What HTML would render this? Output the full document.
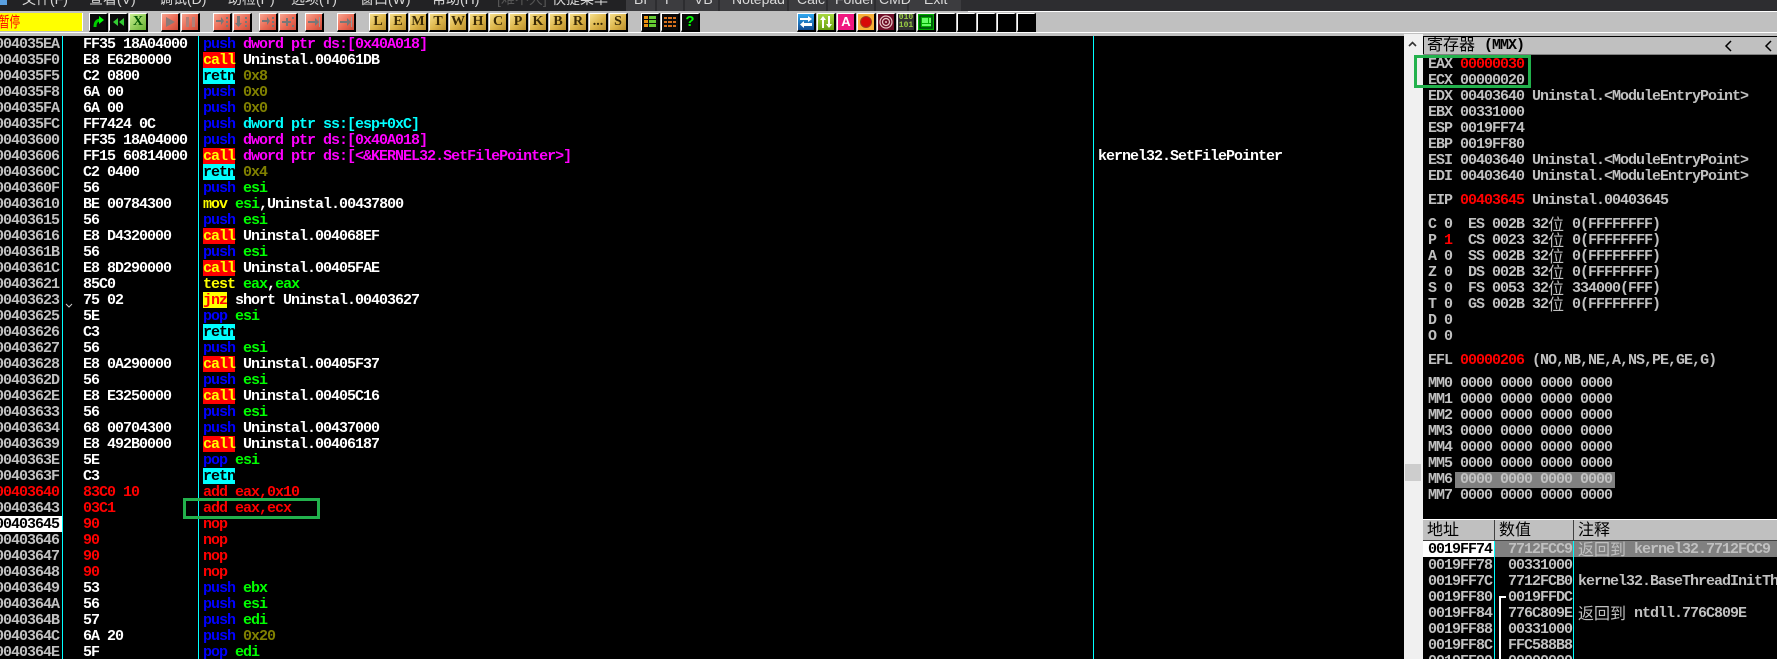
<!DOCTYPE html>
<html>
<head>
<meta charset="utf-8">
<style>
html,body{margin:0;padding:0;background:#000;}
#p{position:relative;width:1777px;height:659px;overflow:hidden;background:#000;font-family:"Liberation Mono","DejaVu Sans Mono",monospace;}
.a{position:absolute;}
.m{font-size:15px;letter-spacing:-1px;font-weight:bold;line-height:16px;white-space:pre;}
/* menu */
.mi{position:absolute;top:-9px;height:16px;line-height:16px;font:14px/16px "Liberation Sans","Noto Sans CJK SC",sans-serif;color:#d8d8d8;white-space:pre;}
.tab{position:absolute;top:0;height:11px;background:#3c3c3f;}
/* toolbar */
.b{position:absolute;top:13px;width:16px;height:16px;border:1px solid;border-color:#fff #000 #000 #fff;border-width:1px 2px 2px 1px;overflow:hidden;}
.k{background:#0a0a0a;}
.r{background:linear-gradient(135deg,#f8a490,#ea6a54 55%,#cc4c3a);}
.y{background:linear-gradient(135deg,#f7e08c,#dcb54a 55%,#b98e2c);font:bold 14px/16px "Liberation Serif",serif;color:#3a2a05;text-align:center;}
.b svg{display:block;width:16px;height:16px;}
/* disasm */
#ad{left:0;top:37px;width:62px;height:622px;overflow:hidden;color:#c0c0c0;}
#ad div{height:16px;text-indent:-5px;}
#by{left:83px;top:37px;color:#fff;}
#di{left:203px;top:37px;color:#fff;}
.bl{color:#0000ff}.mg{color:#ff00ff}.cy{color:#00ffff}.gr{color:#00ff00}.ol{color:#808000}.ye{color:#ffff00}.rd{color:#ff0000}.wh{color:#fff}
.c{display:inline-block;height:15px;background:#ff0000;box-shadow:0 -1px 0 #ff0000;color:#ffff00;vertical-align:top;}
.t{display:inline-block;height:15px;background:#00ffff;box-shadow:0 -1px 0 #00ffff;color:#000;vertical-align:top;}
.j{display:inline-block;height:15px;background:#ffff00;box-shadow:0 -1px 0 #ffff00;color:#ff0000;vertical-align:top;}
.line{position:absolute;top:36px;height:623px;width:1px;background:#00ffff;}
/* regs */
.rg{position:absolute;left:1428px;color:#c0c0c0;}
.w{display:inline-block;position:relative;top:-2px;width:16px;height:16px;font:normal 16px/16px "WenQuanYi Zen Hei","Noto Sans CJK SC",sans-serif;letter-spacing:0;vertical-align:top;}
.h{position:absolute;font:16px/20px "Liberation Sans","Noto Sans CJK SC",sans-serif;color:#000;}
.s{position:absolute;height:16px;color:#c0c0c0;}
.z{display:inline-block;position:relative;top:-2px;width:48px;height:16px;font:normal 16px/16px "WenQuanYi Zen Hei","Noto Sans CJK SC",sans-serif;letter-spacing:0;vertical-align:top;}
</style>
</head>
<body>
<div id="p">
<!-- menu bar -->
<div class="a" style="left:0;top:0;width:1777px;height:11px;background:#2d2d30;"></div>
<div class="a" style="left:0;top:0;width:626px;height:11px;background:#222224;"></div>
<div class="a" style="left:0;top:0;width:7px;height:5px;background:#5aa0e0;"></div>
<div class="tab" style="left:626px;width:29px"></div>
<div class="tab" style="left:657px;width:26px"></div>
<div class="tab" style="left:685px;width:33px"></div>
<div class="tab" style="left:720px;width:67px"></div>
<div class="tab" style="left:789px;width:37px"></div>
<div class="tab" style="left:828px;width:46px"></div>
<div class="tab" style="left:876px;width:31px"></div>
<div class="tab" style="left:909px;width:52px"></div>
<div class="mi" style="left:22px">文件(F)</div>
<div class="mi" style="left:89px">查看(V)</div>
<div class="mi" style="left:159px">调试(D)</div>
<div class="mi" style="left:228px">助检(P)</div>
<div class="mi" style="left:291px">选项(T)</div>
<div class="mi" style="left:360px">窗口(W)</div>
<div class="mi" style="left:432px">帮助(H)</div>
<div class="mi" style="left:497px;color:#555">[难不大]</div>
<div class="mi" style="left:552px">快捷菜单</div>
<div class="mi" style="left:634px">BP</div>
<div class="mi" style="left:665px">P</div>
<div class="mi" style="left:694px">VB</div>
<div class="mi" style="left:732px">Notepad</div>
<div class="mi" style="left:797px">Calc</div>
<div class="mi" style="left:835px">Folder</div>
<div class="mi" style="left:879px">CMD</div>
<div class="mi" style="left:924px">Exit</div>

<!-- toolbar strip -->
<div class="a" style="left:0;top:11px;width:1777px;height:25px;background:#c0c0c0;"></div>
<div class="a" style="left:968px;top:11px;width:809px;height:1px;background:#fff;"></div>
<div class="a" style="left:0;top:32px;width:1777px;height:1px;background:#fff;"></div>
<div class="a" style="left:0;top:13px;width:82px;height:18px;background:#ffff00;overflow:hidden;">
<span class="a" style="left:-1px;top:0;font:15px/18px 'Noto Sans CJK SC',sans-serif;color:#f00;transform:scaleX(.7);transform-origin:0 0;white-space:pre;">暂停</span></div>
<div class="a" style="left:82px;top:13px;width:1px;height:18px;background:#fff;"></div>

<div class="b k" style="left:89px"><svg viewBox="0 0 16 16"><path d="M5 13C5 8 7 6 11 6" stroke="#0c0" stroke-width="3" fill="none"/><path d="M9 2l5 4-5 4z" fill="#0f0"/></svg></div>
<div class="b k" style="left:109px"><svg viewBox="0 0 16 16"><path d="M8 4v8L3 8zM14 4v8L9 8z" fill="#3c3"/></svg></div>
<div class="b" style="left:129px;background:linear-gradient(135deg,#c8f090,#66b030);font:bold 14px/16px 'Liberation Serif',serif;color:#050;text-align:center;">X</div>

<div class="b r" style="left:161px"><svg viewBox="0 0 16 16"><path d="M4 3l9 5-9 5z" fill="#8a7a78"/></svg></div>
<div class="b r" style="left:181px"><svg viewBox="0 0 16 16"><path d="M4 3h3v10H4zM10 3h3v10h-3z" fill="#b08078"/></svg></div>
<div class="b r" style="left:213px"><svg viewBox="0 0 16 16"><path d="M2 6h5V3l3 4-3 4V8H2zM12 3h2v2h-2zM12 7h2v2h-2zM12 11h2v2h-2z" fill="#777"/></svg></div>
<div class="b r" style="left:233px"><svg viewBox="0 0 16 16"><path d="M3 2h3v7h2l-3.500 4L1 9h2zM11 3h2v2h-2zM11 7h2v2h-2zM11 11h2v2h-2z" fill="#777"/></svg></div>
<div class="b r" style="left:259px"><svg viewBox="0 0 16 16"><path d="M2 6h5V3l3 4-3 4V8H2zM12 3h2v2h-2zM12 7h2v2h-2zM12 11h2v2h-2z" fill="#777"/></svg></div>
<div class="b r" style="left:279px"><svg viewBox="0 0 16 16"><path d="M2 7h4V4h2v3h3v2H8v3H6V9H2zM12 3h2v2h-2zM12 11h2v2h-2z" fill="#777"/></svg></div>
<div class="b r" style="left:305px"><svg viewBox="0 0 16 16"><path d="M2 7h7V4l4 4-4 4V9H2z" fill="#777"/><path d="M13 3h1v10h-1z" fill="#999"/></svg></div>
<div class="b r" style="left:337px"><svg viewBox="0 0 16 16"><path d="M2 7h7V4l4 4-4 4V9H2z" fill="#777"/><path d="M13 3h1v10h-1z" fill="#999"/></svg></div>

<div class="b y" style="left:369px">L</div>
<div class="b y" style="left:389px">E</div>
<div class="b y" style="left:409px">M</div>
<div class="b y" style="left:429px">T</div>
<div class="b y" style="left:449px">W</div>
<div class="b y" style="left:469px">H</div>
<div class="b y" style="left:489px">C</div>
<div class="b y" style="left:509px">P</div>
<div class="b y" style="left:529px">K</div>
<div class="b y" style="left:549px">B</div>
<div class="b y" style="left:569px">R</div>
<div class="b y" style="left:589px">...</div>
<div class="b y" style="left:609px">S</div>

<div class="b k" style="left:641px"><svg viewBox="0 0 16 16"><path d="M2 2h4v3H2zM2 6h4v3H2zM2 10h4v3H2z" fill="#e89010"/><path d="M7 2h7v3H7zM7 6h7v3H7zM7 10h7v3H7z" fill="#6c3"/></svg></div>
<div class="b k" style="left:661px"><svg viewBox="0 0 16 16"><path d="M2 3h3v2H2zM6 3h4v2H6zM11 3h3v2h-3zM2 7h3v2H2zM6 7h4v2H6zM11 7h3v2h-3zM2 11h3v2H2zM6 11h4v2H6zM11 11h3v2h-3z" fill="#d8701c"/></svg></div>
<div class="b k" style="left:681px;color:#0f0;font:bold 15px/16px 'Liberation Sans',sans-serif;text-align:center;">?</div>

<div class="b" style="left:797px;background:linear-gradient(180deg,#30a8f0,#104a90)"><svg viewBox="0 0 16 16"><path d="M2 4h8V2l4 3-4 3V6H2zM14 9H6V7L2 10.500 6 14v-2h8z" fill="#fff"/></svg></div>
<div class="b" style="left:817px;background:linear-gradient(180deg,#a8d840,#68a010)"><svg viewBox="0 0 16 16"><path d="M5 2l3 4H6v8H4V6H2zM11 14L8 10h2V2h2v8h2z" fill="#fff"/></svg></div>
<div class="b" style="left:837px;background:#f01880;color:#fff;font:bold 13px/16px 'Liberation Sans',sans-serif;text-align:center;">A</div>
<div class="b" style="left:857px;background:#f8b038"><svg viewBox="0 0 16 16"><circle cx="8" cy="8" r="5.500" fill="#d80808" stroke="#a04020"/></svg></div>
<div class="b" style="left:877px;background:#701028"><svg viewBox="0 0 16 16"><circle cx="8" cy="8" r="6" fill="none" stroke="#e8c8c8" stroke-width="1.200"/><circle cx="8" cy="8" r="3.500" fill="none" stroke="#e8c8c8" stroke-width="1.200"/><circle cx="8" cy="8" r="1" fill="#e8c8c8"/></svg></div>
<div class="b" style="left:897px;background:#333;color:#9c4;font:bold 8px/8px 'Liberation Mono',monospace;text-align:center;">010<br>101</div>
<div class="b" style="left:917px;background:#0a0"><svg viewBox="0 0 16 16"><path d="M2 2h12v12H2z" fill="none" stroke="#041" stroke-width="1.500"/><path d="M4 4h6v5H4zM11 4h2v5h-2zM4 10h9v2H4z" fill="#6f6"/></svg></div>
<div class="b" style="left:937px;background:#000"></div>
<div class="b" style="left:957px;background:#000"></div>
<div class="b" style="left:977px;background:#000"></div>
<div class="b" style="left:997px;background:#000"></div>
<div class="b" style="left:1017px;background:#000"></div>

<!-- disasm panel -->
<div class="a" style="left:0;top:516px;width:62px;height:16px;background:#fff;"></div>
<div id="ad" class="a m"><div>004035EA</div><div>004035F0</div><div>004035F5</div><div>004035F8</div><div>004035FA</div><div>004035FC</div><div>00403600</div><div>00403606</div><div>0040360C</div><div>0040360F</div><div>00403610</div><div>00403615</div><div>00403616</div><div>0040361B</div><div>0040361C</div><div>00403621</div><div>00403623</div><div>00403625</div><div>00403626</div><div>00403627</div><div>00403628</div><div>0040362D</div><div>0040362E</div><div>00403633</div><div>00403634</div><div>00403639</div><div>0040363E</div><div>0040363F</div><div class="rd">00403640</div><div>00403643</div><div style="color:#000">00403645</div><div>00403646</div><div>00403647</div><div>00403648</div><div>00403649</div><div>0040364A</div><div>0040364B</div><div>0040364C</div><div>0040364E</div></div>
<div id="by" class="a m">FF35 18A04000
E8 E62B0000
C2 0800
6A 00
6A 00
FF7424 0C
FF35 18A04000
FF15 60814000
C2 0400
56
BE 00784300
56
E8 D4320000
56
E8 8D290000
85C0
75 02
5E
C3
56
E8 0A290000
56
E8 E3250000
56
68 00704300
E8 492B0000
5E
C3
<span class="rd">83C0 10
03C1
90
90
90
90</span>
53
56
57
6A 20
5F</div>
<div class="a" style="left:65px;top:303px;width:8px;height:5px;"><svg width="8" height="5" style="display:block"><path d="M1 1l3 3 3-3" stroke="#ccc" fill="none"/></svg></div>
<div id="di" class="a m"><span class="bl">push</span> <span class="mg">dword ptr ds:[0x40A018]</span>
<span class="c">call</span> Uninstal.004061DB
<span class="t">retn</span> <span class="ol">0x8</span>
<span class="bl">push</span> <span class="ol">0x0</span>
<span class="bl">push</span> <span class="ol">0x0</span>
<span class="bl">push</span> <span class="cy">dword ptr ss:[esp+0xC]</span>
<span class="bl">push</span> <span class="mg">dword ptr ds:[0x40A018]</span>
<span class="c">call</span> <span class="mg">dword ptr ds:[&lt;&amp;KERNEL32.SetFilePointer&gt;]</span>
<span class="t">retn</span> <span class="ol">0x4</span>
<span class="bl">push</span> <span class="gr">esi</span>
<span class="ye">mov</span> <span class="gr">esi</span>,Uninstal.00437800
<span class="bl">push</span> <span class="gr">esi</span>
<span class="c">call</span> Uninstal.004068EF
<span class="bl">push</span> <span class="gr">esi</span>
<span class="c">call</span> Uninstal.00405FAE
<span class="ye">test</span> <span class="gr">eax</span>,<span class="gr">eax</span>
<span class="j">jnz</span> short Uninstal.00403627
<span class="bl">pop</span> <span class="gr">esi</span>
<span class="t">retn</span>
<span class="bl">push</span> <span class="gr">esi</span>
<span class="c">call</span> Uninstal.00405F37
<span class="bl">push</span> <span class="gr">esi</span>
<span class="c">call</span> Uninstal.00405C16
<span class="bl">push</span> <span class="gr">esi</span>
<span class="bl">push</span> Uninstal.00437000
<span class="c">call</span> Uninstal.00406187
<span class="bl">pop</span> <span class="gr">esi</span>
<span class="t">retn</span>
<span class="rd">add eax,0x10
add eax,ecx
nop
nop
nop
nop</span>
<span class="bl">push</span> <span class="gr">ebx</span>
<span class="bl">push</span> <span class="gr">esi</span>
<span class="bl">push</span> <span class="gr">edi</span>
<span class="bl">push</span> <span class="ol">0x20</span>
<span class="bl">pop</span> <span class="gr">edi</span></div>
<div class="a m" style="left:1098px;top:149px;color:#fff;">kernel32.SetFilePointer</div>
<div class="line" style="left:62px"></div>
<div class="line" style="left:198px"></div>
<div class="line" style="left:1093px"></div>
<div class="a" style="left:183px;top:498px;width:131px;height:15px;border:3px solid #22b14c;"></div>

<!-- scrollbar -->
<div class="a" style="left:1404px;top:34px;width:19px;height:625px;background:#f0f0f0;"></div>
<div class="a" style="left:1405px;top:464px;width:16px;height:17px;background:#cdcdcd;"></div>
<svg class="a" style="left:1408px;top:41px" width="9" height="7"><path d="M1 5l3.500-3.500L8 5" stroke="#333" stroke-width="1.600" fill="none"/></svg>

<!-- register header -->
<div class="a" style="left:1424px;top:37px;width:353px;height:17px;background:#c0c0c0;"></div>
<div class="h" style="left:1427px;top:36px;font-size:16px;">寄存器</div>
<div class="a m" style="left:1484px;top:38px;color:#000;">(MMX)</div>
<svg class="a" style="left:1724px;top:40px" width="9" height="12"><path d="M7 1L2 6l5 5" stroke="#000" stroke-width="1.500" fill="none"/></svg>
<svg class="a" style="left:1764px;top:40px" width="9" height="12"><path d="M7 1L2 6l5 5" stroke="#000" stroke-width="1.500" fill="none"/></svg>
<div class="a" style="left:1423px;top:54px;width:354px;height:1px;background:#808080;"></div>

<!-- registers -->
<div class="rg m" style="top:57px">EAX <span class="rd">00000030</span></div>
<div class="rg m" style="top:73px">ECX 00000020</div>
<div class="rg m" style="top:89px">EDX 00403640 Uninstal.&lt;ModuleEntryPoint&gt;</div>
<div class="rg m" style="top:105px">EBX 00331000</div>
<div class="rg m" style="top:121px">ESP 0019FF74</div>
<div class="rg m" style="top:137px">EBP 0019FF80</div>
<div class="rg m" style="top:153px">ESI 00403640 Uninstal.&lt;ModuleEntryPoint&gt;</div>
<div class="rg m" style="top:169px">EDI 00403640 Uninstal.&lt;ModuleEntryPoint&gt;</div>
<div class="rg m" style="top:193px">EIP <span class="rd">00403645</span> Uninstal.00403645</div>
<div class="rg m" style="top:217px">C 0  ES 002B 32<span class="w">位</span> 0(FFFFFFFF)</div>
<div class="rg m" style="top:233px">P <span class="rd">1</span>  CS 0023 32<span class="w">位</span> 0(FFFFFFFF)</div>
<div class="rg m" style="top:249px">A 0  SS 002B 32<span class="w">位</span> 0(FFFFFFFF)</div>
<div class="rg m" style="top:265px">Z 0  DS 002B 32<span class="w">位</span> 0(FFFFFFFF)</div>
<div class="rg m" style="top:281px">S 0  FS 0053 32<span class="w">位</span> 334000(FFF)</div>
<div class="rg m" style="top:297px">T 0  GS 002B 32<span class="w">位</span> 0(FFFFFFFF)</div>
<div class="rg m" style="top:313px">D 0</div>
<div class="rg m" style="top:329px">O 0</div>
<div class="rg m" style="top:353px">EFL <span class="rd">00000206</span> (NO,NB,NE,A,NS,PE,GE,G)</div>
<div class="rg m" style="top:376px">MM0 0000 0000 0000 0000</div>
<div class="rg m" style="top:392px">MM1 0000 0000 0000 0000</div>
<div class="rg m" style="top:408px">MM2 0000 0000 0000 0000</div>
<div class="rg m" style="top:424px">MM3 0000 0000 0000 0000</div>
<div class="rg m" style="top:440px">MM4 0000 0000 0000 0000</div>
<div class="rg m" style="top:456px">MM5 0000 0000 0000 0000</div>
<div class="a" style="left:1455px;top:472px;width:160px;height:16px;background:#808080;"></div>
<div class="rg m" style="top:472px">MM6 0000 0000 0000 0000</div>
<div class="rg m" style="top:488px">MM7 0000 0000 0000 0000</div>
<div class="a" style="left:1414px;top:55px;width:111px;height:27px;border:3px solid #22b14c;"></div>

<!-- stack panel -->
<div class="a" style="left:1423px;top:519px;width:354px;height:1px;background:#fff;"></div>
<div class="a" style="left:1423px;top:520px;width:354px;height:20px;background:#c0c0c0;"></div>
<div class="a" style="left:1494px;top:520px;width:1px;height:20px;background:#404040;"></div>
<div class="a" style="left:1573px;top:520px;width:1px;height:20px;background:#404040;"></div>
<div class="h" style="left:1427px;top:521px;">地址</div>
<div class="h" style="left:1499px;top:521px;">数值</div>
<div class="h" style="left:1578px;top:521px;">注释</div>
<div class="a" style="left:1423px;top:540px;width:354px;height:1px;background:#404040;"></div>
<div class="a" style="left:1423px;top:541px;width:71px;height:16px;background:#fff;"></div>
<div class="a" style="left:1495px;top:541px;width:282px;height:16px;background:#808080;"></div>

<div class="s m" style="left:1428px;top:542px;color:#000">0019FF74</div>
<div class="s m" style="left:1508px;top:542px">7712FCC9</div>
<div class="s m" style="left:1578px;top:542px"><span class="z">返回到</span> kernel32.7712FCC9</div>
<div class="s m" style="left:1428px;top:558px">0019FF78</div>
<div class="s m" style="left:1508px;top:558px">00331000</div>
<div class="s m" style="left:1428px;top:574px">0019FF7C</div>
<div class="s m" style="left:1508px;top:574px">7712FCB0</div>
<div class="s m" style="left:1578px;top:574px">kernel32.BaseThreadInitThunk</div>
<div class="s m" style="left:1428px;top:590px">0019FF80</div>
<div class="s m" style="left:1508px;top:590px">0019FFDC</div>
<div class="s m" style="left:1428px;top:606px">0019FF84</div>
<div class="s m" style="left:1508px;top:606px">776C809E</div>
<div class="s m" style="left:1578px;top:606px"><span class="z">返回到</span> ntdll.776C809E</div>
<div class="s m" style="left:1428px;top:622px">0019FF88</div>
<div class="s m" style="left:1508px;top:622px">00331000</div>
<div class="s m" style="left:1428px;top:638px">0019FF8C</div>
<div class="s m" style="left:1508px;top:638px">FFC588B8</div>
<div class="s m" style="left:1428px;top:654px">0019FF90</div>
<div class="s m" style="left:1508px;top:654px">00000000</div>
<div class="a" style="left:1494px;top:541px;width:1px;height:118px;background:#00ffff;"></div>
<div class="a" style="left:1573px;top:541px;width:1px;height:118px;background:#00ffff;"></div>
<div class="a" style="left:1499px;top:596px;width:2px;height:63px;background:#fff;"></div>
<div class="a" style="left:1499px;top:596px;width:7px;height:2px;background:#fff;"></div>
</div>
</body>
</html>
